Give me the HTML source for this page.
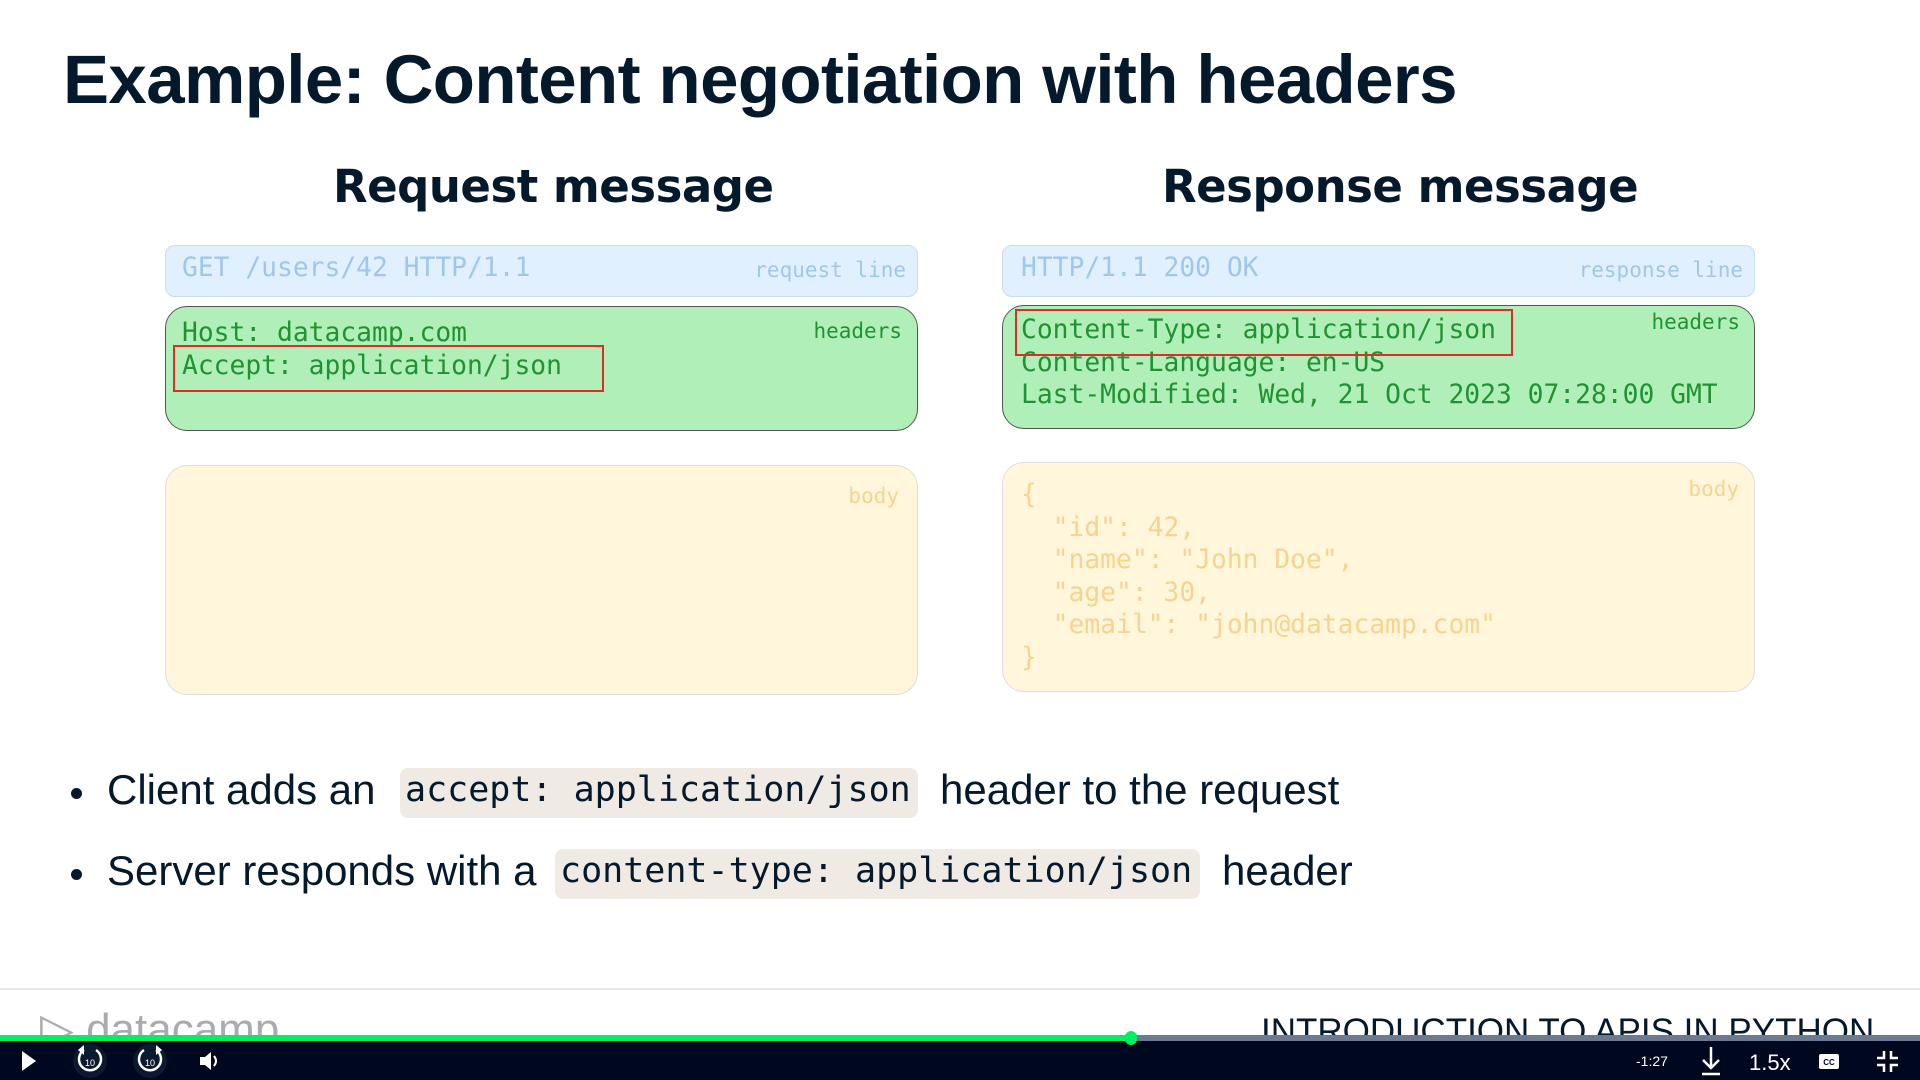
<!DOCTYPE html>
<html><head><meta charset="utf-8"><style>
*{margin:0;padding:0;box-sizing:border-box}
body{width:1920px;height:1080px;background:#fff;position:relative;overflow:hidden;font-family:"Liberation Sans",sans-serif;color:#05192d}
.a{position:absolute;white-space:pre}
.mono{font-family:"DejaVu Sans Mono","Liberation Mono",monospace}
.box{position:absolute;border-radius:22px;border:1.5px solid}
.lbl{position:absolute;font-family:"DejaVu Sans Mono",monospace;font-size:21px;white-space:pre}
.red{position:absolute;border:2.5px solid #e02b2b}
.code{position:absolute;background:#efebe4;border-radius:8px}
.dot{position:absolute;width:11px;height:11px;border-radius:50%;background:#05192d}
</style></head><body>
<div class="a" style="left:63px;top:40px;font-size:69px;font-weight:bold;letter-spacing:-0.6px">Example: Content negotiation with headers</div>
<div class="a" style="left:333px;top:160px;font-size:45px;font-weight:bold;font-family:'DejaVu Sans',sans-serif;letter-spacing:-0.5px">Request message</div>
<div class="a" style="left:1162px;top:160px;font-size:45px;font-weight:bold;font-family:'DejaVu Sans',sans-serif;letter-spacing:-0.5px">Response message</div>

<div class="box" style="left:165px;top:245px;width:753px;height:52px;background:#e1f0fe;border-color:#c6daf0;border-radius:10px"></div>
<div class="a mono" style="left:182px;top:253px;font-size:26.3px;color:#9fc6eb">GET /users/42 HTTP/1.1</div>
<div class="lbl" style="right:1014px;top:258px;color:#9fc6eb">request line</div>

<div class="box" style="left:165px;top:306px;width:753px;height:125px;background:#b0f0b8;border-color:#555"></div>
<div class="a mono" style="left:182px;top:317px;font-size:26.3px;color:#219233;line-height:33px">Host: datacamp.com
Accept: application/json</div>
<div class="lbl" style="right:1018px;top:319px;color:#219233">headers</div>
<div class="red" style="left:173px;top:345px;width:431px;height:47px"></div>

<div class="box" style="left:165px;top:465px;width:753px;height:230px;background:#fff6dc;border-color:#ddd"></div>
<div class="lbl" style="right:1021px;top:484px;color:#f7d38e">body</div>

<div class="box" style="left:1002px;top:245px;width:753px;height:52px;background:#e1f0fe;border-color:#c6daf0;border-radius:10px"></div>
<div class="a mono" style="left:1021px;top:253px;font-size:26.3px;color:#9fc6eb">HTTP/1.1 200 OK</div>
<div class="lbl" style="right:177px;top:258px;color:#9fc6eb">response line</div>

<div class="box" style="left:1002px;top:305px;width:753px;height:124px;background:#b0f0b8;border-color:#555"></div>
<div class="a mono" style="left:1021px;top:314px;font-size:26.3px;color:#219233;line-height:32.5px">Content-Type: application/json
Content-Language: en-US
Last-Modified: Wed, 21 Oct 2023 07:28:00 GMT</div>
<div class="lbl" style="right:180px;top:310px;color:#219233">headers</div>
<div class="red" style="left:1015px;top:309px;width:498px;height:47px"></div>

<div class="box" style="left:1002px;top:462px;width:753px;height:230px;background:#fff6dc;border-color:#ddd"></div>
<div class="a mono" style="left:1021px;top:479px;font-size:26.3px;color:#f7d38e;line-height:32.6px">{
  "id": 42,
  "name": "John Doe",
  "age": 30,
  "email": "john@datacamp.com"
}</div>
<div class="lbl" style="right:181px;top:477px;color:#f7d38e">body</div>

<div class="dot" style="left:71px;top:788px"></div>
<div class="code" style="left:400px;top:768px;width:518px;height:50px"></div>
<div class="a" style="left:107px;top:766px;font-size:42px">Client adds an</div>
<div class="a mono" style="left:405px;top:770px;font-size:35px">accept: application/json</div>
<div class="a" style="left:940px;top:766px;font-size:42px">header to the request</div>

<div class="dot" style="left:71px;top:869px"></div>
<div class="code" style="left:555px;top:849px;width:645px;height:50px"></div>
<div class="a" style="left:107px;top:847px;font-size:42px">Server responds with a</div>
<div class="a mono" style="left:560px;top:851px;font-size:35px">content-type: application/json</div>
<div class="a" style="left:1222px;top:847px;font-size:42px">header</div>

<div style="position:absolute;left:0;top:988px;width:1920px;height:2px;background:#e8e6e0"></div>
<div class="a" style="left:40px;top:1004px;font-size:44px;color:#a8acb0">▷ datacamp</div>
<div class="a" style="left:1261px;top:1012px;font-size:35px;color:#05192d">INTRODUCTION TO APIS IN PYTHON</div>

<div style="position:absolute;left:0;top:1035px;width:1920px;height:45px;background:#000820"></div>
<div style="position:absolute;left:0;top:1035px;width:1920px;height:6px;background:#6b7a90"></div>
<div style="position:absolute;left:0;top:1035px;width:1131px;height:6px;background:#03ef62"></div>
<div style="position:absolute;left:1125px;top:1031px;width:12px;height:14px;border-radius:6px;background:#03ef62"></div>
<svg style="position:absolute;left:0;top:1041px" width="1920" height="39">
<polygon points="22,10 22,30 36,20" fill="#fff"/>
<circle cx="90" cy="20" r="17" fill="#0b1a2e"/><circle cx="150" cy="20" r="17" fill="#0b1a2e"/>
<path d="M84,9 A11,11 0 1 0 96,9" stroke="#fff" stroke-width="2.5" fill="none"/><polygon points="84,4 84,14 78,9" fill="#fff"/>
<path d="M156,9 A11,11 0 1 1 144,9" stroke="#fff" stroke-width="2.5" fill="none"/><polygon points="156,4 156,14 162,9" fill="#fff"/>
<text x="90" y="25" fill="#fff" font-size="9" text-anchor="middle" font-family="Liberation Sans">10</text>
<text x="150" y="25" fill="#fff" font-size="9" text-anchor="middle" font-family="Liberation Sans">10</text>
<polygon points="200,16 205,16 211,11 211,29 205,24 200,24" fill="#fff"/>
<path d="M214,15 Q218,20 214,25" stroke="#fff" stroke-width="2" fill="none"/>
<text x="1636" y="25" fill="#fff" font-size="14" font-family="Liberation Sans">-1:27</text>
<path d="M1711,6 V26 M1703,19 L1711,27 L1719,19 M1702,33 H1720" stroke="#fff" stroke-width="2.5" fill="none"/>
<text x="1749" y="29" fill="#fff" font-size="22" font-family="Liberation Sans">1.5x</text>
<rect x="1819" y="13" width="20" height="15" rx="2" fill="#fff"/>
<text x="1829" y="24" fill="#000820" font-size="8" text-anchor="middle" font-family="Liberation Sans" font-weight="bold">CC</text>
<path d="M1884,10 V17 H1877 M1891,10 V17 H1898 M1884,31 V24 H1877 M1891,31 V24 H1898" stroke="#fff" stroke-width="2.5" fill="none"/>
</svg>
</body></html>
